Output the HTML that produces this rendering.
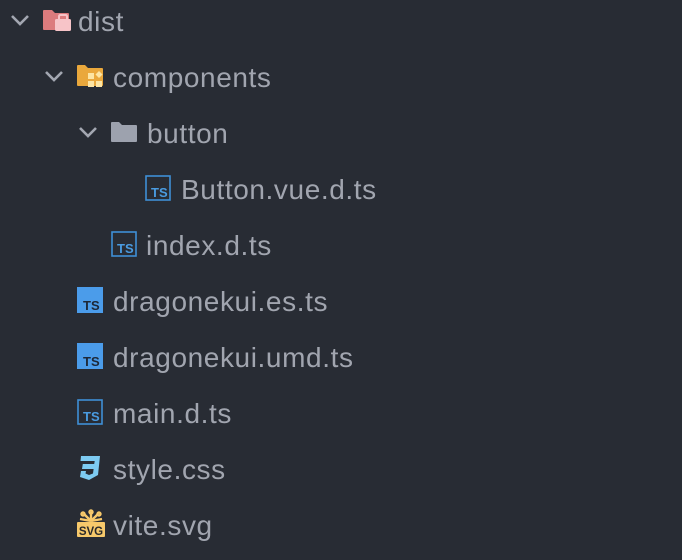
<!DOCTYPE html>
<html><head><style>
body{margin:0;width:682px;height:560px;background:#282c34;overflow:hidden;font-family:"Liberation Sans",sans-serif;}
.t{position:absolute;top:8px;font-size:28px;color:#a1a5af;letter-spacing:0.6px;line-height:30px;}
svg{position:absolute;}
</style></head><body>
<svg style="left:9px;top:12px" width="22" height="16" viewBox="0 0 22 16"><path d="M3 4 L11 12 L19 4" stroke="#a3a7b1" stroke-width="2.6" fill="none"/></svg>
<svg style="left:43px;top:68px" width="22" height="16" viewBox="0 0 22 16"><path d="M3 4 L11 12 L19 4" stroke="#a3a7b1" stroke-width="2.6" fill="none"/></svg>
<svg style="left:77px;top:124px" width="22" height="16" viewBox="0 0 22 16"><path d="M3 4 L11 12 L19 4" stroke="#a3a7b1" stroke-width="2.6" fill="none"/></svg>

<svg style="left:42px;top:9px" width="32" height="24" viewBox="0 0 32 24">
<path d="M1 2 Q1 1 2 1 H10 L13 4 H26 Q27 4 27 5 V20 Q27 21 26 21 H2 Q1 21 1 20Z" fill="#dc7b7d"/>
<rect x="13" y="10" width="16" height="12" rx="1.5" fill="#f7c4c8"/>
<path d="M17 10 V7.5 Q17 6 18.5 6 H23.5 Q25 6 25 7.5 V10" stroke="#f7c4c8" stroke-width="2" fill="none"/>
</svg>
<div class="t" style="left:78px;top:7px">dist</div>

<svg style="left:76px;top:64px" width="32" height="26" viewBox="0 0 32 26">
<path d="M1 2 Q1 1 2 1 H9 L12 4 H26 Q27 4 27 5 V21 Q27 22 26 22 H2 Q1 22 1 21Z" fill="#eaa83c"/>
<rect x="12" y="9" width="6" height="6" fill="#fde5a4"/>
<rect x="12" y="17" width="6" height="6" fill="#fde5a4"/>
<rect x="20" y="17" width="6" height="6" fill="#fde5a4"/>
<path d="M23 7 L26.5 10.5 L23 14 L19.5 10.5Z" fill="#fde5a4"/>
</svg>
<div class="t" style="left:113px;top:63px">components</div>

<svg style="left:110px;top:121px" width="30" height="24" viewBox="0 0 30 24">
<path d="M1 2 Q1 1 2 1 H9 L12 4 H26 Q27 4 27 5 V20 Q27 21 26 21 H2 Q1 21 1 20Z" fill="#9da2ae"/>
</svg>
<div class="t" style="left:147px;top:119px">button</div>

<svg style="left:145px;top:175px" width="26" height="26" viewBox="0 0 26 26"><rect x="1" y="1" width="24" height="24" fill="none" stroke="#3e8fd6" stroke-width="1.6"/><text x="6" y="22" font-family="Liberation Sans" font-weight="bold" font-size="13" fill="#4a9be0">TS</text></svg>
<div class="t" style="left:181px;top:175px">Button.vue.d.ts</div>

<svg style="left:111px;top:231px" width="26" height="26" viewBox="0 0 26 26"><rect x="1" y="1" width="24" height="24" fill="none" stroke="#3e8fd6" stroke-width="1.6"/><text x="6" y="22" font-family="Liberation Sans" font-weight="bold" font-size="13" fill="#4a9be0">TS</text></svg>
<div class="t" style="left:146px;top:231px">index.d.ts</div>

<svg style="left:77px;top:287px" width="26" height="26" viewBox="0 0 26 26"><rect width="26" height="26" fill="#4b9cea"/><text x="6" y="23" font-family="Liberation Sans" font-weight="bold" font-size="13" fill="#1d2838">TS</text></svg>
<div class="t" style="left:113px;top:287px">dragonekui.es.ts</div>

<svg style="left:77px;top:343px" width="26" height="26" viewBox="0 0 26 26"><rect width="26" height="26" fill="#4b9cea"/><text x="6" y="23" font-family="Liberation Sans" font-weight="bold" font-size="13" fill="#1d2838">TS</text></svg>
<div class="t" style="left:113px;top:343px">dragonekui.umd.ts</div>

<svg style="left:77px;top:399px" width="26" height="26" viewBox="0 0 26 26"><rect x="1" y="1" width="24" height="24" fill="none" stroke="#3e8fd6" stroke-width="1.6"/><text x="6" y="22" font-family="Liberation Sans" font-weight="bold" font-size="13" fill="#4a9be0">TS</text></svg>
<div class="t" style="left:113px;top:399px">main.d.ts</div>

<svg style="left:77px;top:455px" width="26" height="28" viewBox="0 0 26 28">
<path d="M4 1 H23 L21 20 L12 25 L3 22 L4 16 H9 L8.5 18.5 L12 20 L16 18.5 L16.6 14 H5 L5.8 9 H17.2 L17.7 6 H3.5Z" fill="#7dcbf2"/>
</svg>
<div class="t" style="left:113px;top:455px">style.css</div>

<svg style="left:76px;top:509px" width="30" height="30" viewBox="0 0 30 30">
<g stroke="#f7c96b" stroke-width="2.4" fill="none"><path d="M15 12 V3"/><path d="M15 12 L8 5"/><path d="M15 12 L22 5"/><path d="M15 12 L4 10"/><path d="M15 12 L26 10"/><circle cx="15" cy="3" r="1.5"/><circle cx="7" cy="5" r="1.5"/><circle cx="23" cy="5" r="1.5"/></g>
<rect x="1" y="13" width="28" height="15" rx="1" fill="#f7c96b"/>
<text x="15" y="26" text-anchor="middle" font-family="Liberation Sans" font-weight="bold" font-size="11.5" fill="#2a2a2a">SVG</text>
</svg>
<div class="t" style="left:113px;top:511px">vite.svg</div>
</body></html>
